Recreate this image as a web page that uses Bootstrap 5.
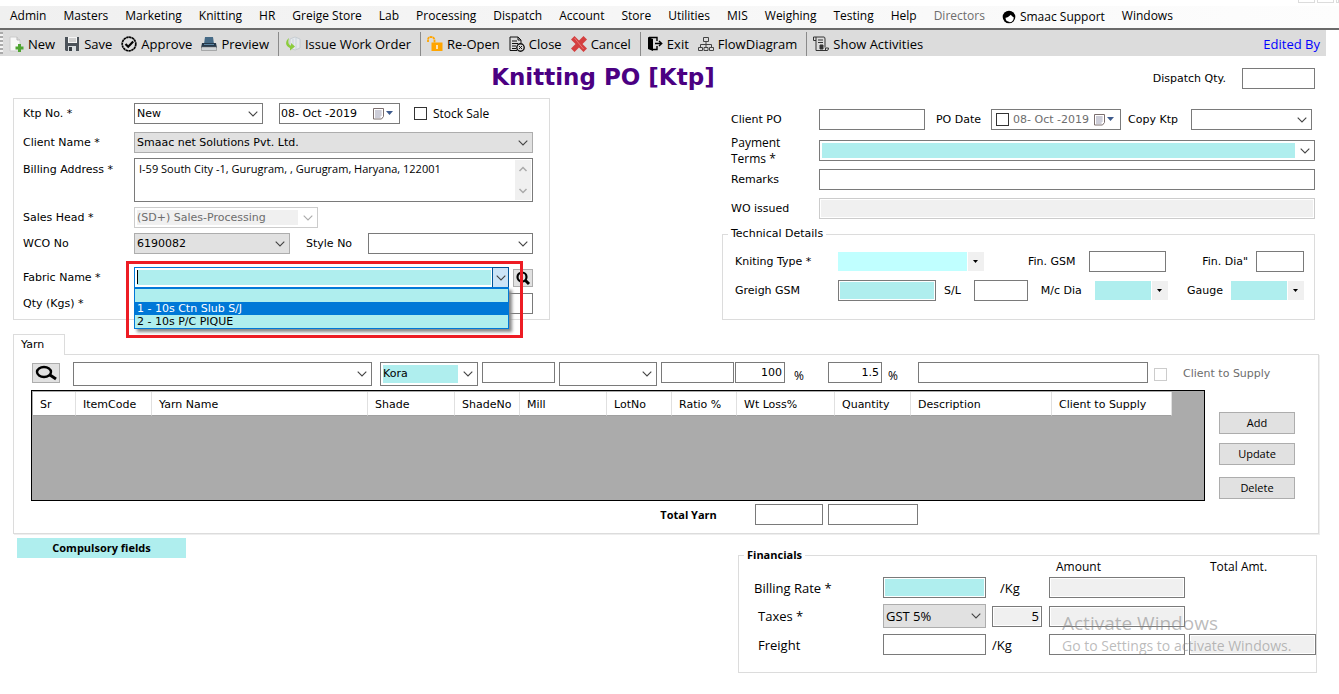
<!DOCTYPE html>
<html lang="en">
<head>
<meta charset="utf-8">
<meta name="viewport" content="width=device-width, initial-scale=1">
<title>Knitting PO [Ktp]</title>
<link href="https://cdn.jsdelivr.net/npm/bootstrap@5.3.0/dist/css/bootstrap.min.css" rel="stylesheet">
<script src="https://cdn.jsdelivr.net/npm/bootstrap@5.3.0/dist/js/bootstrap.bundle.min.js" defer></script>
<style>
:root{--aqua:#afeeee;--line:#dcdcdc;--edge:#7a7a7a;--ui:"Open Sans","Noto Sans",sans-serif;--vd:"DejaVu Sans",sans-serif;
--chev:url("data:image/svg+xml,%3Csvg xmlns='http://www.w3.org/2000/svg' viewBox='0 0 10 6'%3E%3Cpath d='M.7.7 5 5 9.3.7' fill='none' stroke='%23444' stroke-width='1.1'/%3E%3C/svg%3E");
--chevdim:url("data:image/svg+xml,%3Csvg xmlns='http://www.w3.org/2000/svg' viewBox='0 0 10 6'%3E%3Cpath d='M.7.7 5 5 9.3.7' fill='none' stroke='%23aaa' stroke-width='1.1'/%3E%3C/svg%3E");
--tri:url("data:image/svg+xml,%3Csvg xmlns='http://www.w3.org/2000/svg' viewBox='0 0 5 3'%3E%3Cpath d='M0 0h5L2.5 3z'/%3E%3C/svg%3E")}
body{font:11px/16px var(--vd);color:#000;background:#fff}
.ui{font-family:var(--ui);font-size:12px}
.ui11{font-family:var(--ui);font-size:11px}
.big{font-size:13px}
/* menu and toolbar */
.winstrip{height:6px;gap:2px}
.winstrip span{width:17px;height:3px;border:1px solid var(--line);border-top:0}
.winstrip .cut{width:3px}
.menubar{background:linear-gradient(90deg,#f0f0f0,#fdfdfd);border-bottom:2px solid #6a6a6a;height:24px;padding-left:10px;column-gap:17px}
.menubar a{color:#000;padding:0;font:12px/20px var(--ui);white-space:nowrap}
.menubar a.off{color:#6d6d6d}
.toolbar{background:var(--line);height:26px;margin-right:13px;padding:1px 6px 0 8px;font:13px/20px var(--ui);position:relative}
.toolbar::before{content:"";position:absolute;left:0;top:2px;bottom:2px;width:3px;background:repeating-linear-gradient(#aaa 0 2px,#f4f4f4 2px 4px)}
.toolbar button{border:0;background:none;padding:0;display:flex;align-items:center;gap:4px;margin-right:9px;color:#000;white-space:nowrap}
.toolbar svg{width:16px;height:16px;flex:none}
.toolbar .vr{background:#8a8a8a;opacity:1;margin:1px 6px 0 0}
.toolbar a{color:#00f;text-decoration:none}
/* page areas */
.titlerow{display:grid;grid-template-columns:478fr auto 438fr auto 73px;padding:3px 24px 0 13px;height:42px;align-items:center}
.titlerow h1{font:bold 23px/30px var(--vd);color:#4b0082;margin:0 0 4px;grid-column:2;white-space:nowrap}
.titlerow label{grid-column:4}
.areas{display:grid;grid-template-columns:537fr 172fr 593fr;padding:0 24px 0 13px}
.box{border:1px solid var(--line)}
.keyform{padding:4px 16px 5px 9px}
.keyform .line>label:first-child{width:111px;flex:none}
.line{display:flex;align-items:center;margin-bottom:5px}
.m8{margin-bottom:8px}.m10{margin-bottom:10px}.m13{margin-bottom:13px}
/* controls */
.f{height:21px;border:1px solid var(--edge);border-radius:0;background:#fff;color:#000;padding:0 2px;font:inherit;min-width:0;outline-offset:0}
.tall{height:24px}
input.soft{box-shadow:inset 0 0 0 1px #fff}
.aquain{background:var(--aqua)}
.greyin{background:#f0f0f0}
.faint{border-color:#ccc}
select.f{appearance:none;background:#fff var(--chev) no-repeat right 4px center/10px 6px;padding-right:18px}
select.flat{background-color:#e1e1e1;border-color:#adadad}
select.wash{background-image:var(--chev),linear-gradient(var(--aqua),var(--aqua));background-position:right 4px center,2px 2px;background-size:10px 6px,calc(100% - 21px) calc(100% - 4px)}
select.dim{border-color:#ccc;color:#6d6d6d;opacity:1;background-image:var(--chevdim),linear-gradient(#f0f0f0,#f0f0f0);background-position:right 4px center,2px 2px;background-size:10px 6px,calc(100% - 21px) calc(100% - 4px)}
select.old{height:19px;border:0;background:var(--tri) no-repeat right 6px center/5px 3px,linear-gradient(#f0f0f0,#f0f0f0) no-repeat right/16px 100%,linear-gradient(#fff,#fff) no-repeat right/17px 100%,var(--aqua)}
select.pale{background-color:#c0ffff}
.tick{appearance:none;width:13px;height:13px;border:1px solid #333;background:#fff;margin:0;flex:none}
.tick.faint{border-color:#ccc}
.gap14{margin-left:14px}.gap6{margin-left:6px}
.datebox{display:flex;align-items:center;height:21px;border:1px solid var(--edge);background:#fff;padding:0 5px 0 1px;flex:none}
.datebox input[type=text]{border:0;padding:0;flex:1;min-width:0;background:none;font:inherit;color:inherit}
.datebox button{border:0;background:none;padding:0;display:flex;align-items:center}
.grey{color:#6d6d6d}
textarea.f{display:block;width:100%;height:44px;resize:none;padding:2px 18px 0 4px;overflow:hidden;line-height:16px}
textarea.ui11{font:11px/16px var(--ui)}
.scroller{position:absolute;right:2px;top:2px;bottom:2px;width:16px;background:#f0f0f0}
.btnface{background:#e1e1e1;border:1px solid #adadad;border-radius:0;padding:0;color:#000;display:flex;align-items:center;justify-content:center}
/* fabric combo */
.combo{height:21px;border:1px solid #0078d7;display:flex;background:#fff}
.combo input{flex:1;min-width:0;border:0;background:var(--aqua);margin:2px 2px;padding:0}
.combo button{width:17px;margin:-1px;border:1px solid #005499;background:#cce4f7 var(--chev) no-repeat center/10px 6px;padding:0}
.caret{position:absolute;left:3px;top:3px;width:1px;height:14px;background:#000}
.droplist{position:absolute;z-index:3;left:0;right:0;top:20px;border:1px solid #0078d7;border-top-width:2px;background:var(--aqua);box-shadow:3px 3px 3px #888;line-height:13px;margin:0;padding:0;list-style:none}
.droplist li{height:13px;padding-left:2px}
.droplist .on{background:#0078d7;color:#fff}
.redmark{position:absolute;z-index:4;left:-8px;right:-14px;top:-6px;height:77px;border:3px solid #ed1c24;pointer-events:none}
/* order details */
.order{padding:11px 0 0 9px}
.order .line>label:first-child{width:88px;flex:none}
.order .line{height:21px}
.polabel{margin:0 10px 0 11px;flex:none}
.copylabel{margin:0 13px 0 7px;flex:none}
.copysel{margin-right:3px;flex:none}
fieldset.box{min-width:0;position:relative}
fieldset legend{float:none;width:auto;font-size:11px;line-height:16px;margin:0 0 0 5px;padding:0 3px}
.tech{padding:9px 10px 13px 9px}
.tech legend{margin-left:-4px}
.techrow label:first-child{width:106px;padding-left:3px;flex:none}
.gapl{margin-left:13px}
.gap44{margin-left:44px}
/* yarn */
.yarn{margin:14px 20px 0 13px}
.yarn .nav-tabs{border:0}
.yarn .nav-link{border:1px solid var(--line);border-bottom:0;border-radius:0;color:#000;background:#fff;padding:2px 20px 3px 7px;height:21px;margin:0 0 -1px;position:relative;z-index:1;line-height:16px}
.yarnpane{border:1px solid var(--line);box-shadow:1px 1px 0 #eee;padding:7px 23px 8px 17px}
.entry{display:flex;align-items:flex-start;gap:4px;height:28px;padding-left:1px}
.find{margin:1px 9px 0 0}
.joined{margin-left:-3px}
.pct,.pct2{width:35px;padding:6px 0 0 5px}
.pct2{width:28px;padding-left:2px}
.desc{width:230px}
.cts{padding:4px 0 0 12px;width:124px;white-space:nowrap;flex:none}
.ctsbox{margin:6px 0 0 2px}
.gridbox{flex:1;height:111px;border:1px solid #000;background:#ababab;padding:1px 32px 0 1px;min-width:0}
.gridbox table{table-layout:fixed;width:100%;border-collapse:separate;border-spacing:0;margin:0}
.gridbox th{font-weight:400;height:24px;padding:2px 0 0 7px;background:#fff;border-right:1px solid #e0e0e0;border-bottom:1px solid #a0a0a0;white-space:nowrap}
.c43{width:43px}.c65{width:65px}.c76{width:76px}.c87{width:87px}.c98{width:98px}.c120{width:120px}.c141{width:141px}
.acts{width:76px;margin-left:14px;padding-top:22px;display:flex;flex-direction:column;gap:9px}
.acts button{height:22px;font-weight:500}
.acts .last{margin-top:3px}
.totals{display:grid;grid-template-columns:629fr auto 38px 68px 5px 90px 377fr;padding-top:3px;align-items:center}
/* footer row */
.bottomrow{display:grid;grid-template-columns:169px 1fr 579px;padding:4px 22px 0 17px;align-items:start}
.must{background:var(--aqua);line-height:20px;height:20px;text-align:center}
.fin{grid-column:3;margin-top:9px;height:126px;padding:0}
.fingrid{display:grid;grid-template-columns:129px 103px 6px 50px 7px 136px 4px 1fr;padding-left:15px;margin-top:-4px;row-gap:6px;align-items:center}
.fingrid .r{grid-column:1}
.fingrid .amt{grid-column:6;padding-left:7px;margin-bottom:-4px}
.fingrid .tot{grid-column:8;padding-left:21px;margin-bottom:-4px}
.wmark{position:absolute;left:323px;bottom:15px;color:rgba(130,130,130,.55);pointer-events:none;white-space:nowrap;font-family:var(--ui)}
.wmark div{font-size:19px;line-height:24px}
.wmark p{font-size:14px;line-height:22px;margin:0}
.w48{width:48px}.w50{width:50px}.w54{width:54px}.w73{width:73px}.w77{width:77px}.w98{width:98px}.w121{width:121px}.w129{width:129px}.w130{width:130px}.w146{width:146px}.w156{width:156px}.w165{width:165px}.w184{width:184px}.w298{width:298px}
</style>
</head>
<body>
<div class="winstrip d-flex justify-content-end" aria-hidden="true"><span></span><span></span><span class="cut"></span></div>
<nav class="menubar nav flex-nowrap" aria-label="Main menu">
<a class="nav-link" href="#">Admin</a><a class="nav-link" href="#">Masters</a><a class="nav-link" href="#">Marketing</a><a class="nav-link" href="#">Knitting</a><a class="nav-link" href="#">HR</a><a class="nav-link" href="#">Greige Store</a><a class="nav-link" href="#">Lab</a><a class="nav-link" href="#">Processing</a><a class="nav-link" href="#">Dispatch</a><a class="nav-link" href="#">Account</a><a class="nav-link" href="#">Store</a><a class="nav-link" href="#">Utilities</a><a class="nav-link" href="#">MIS</a><a class="nav-link" href="#">Weighing</a><a class="nav-link" href="#">Testing</a><a class="nav-link" href="#">Help</a><a class="nav-link off" href="#">Directors</a>
<a class="nav-link d-flex align-items-center gap-1 ms-n1" href="#"><svg width="14" height="14" viewBox="0 0 14 14"><circle cx="7" cy="7" r="6.300"/><path d="M3.500 7.800C5 8 6.500 6.800 8.800 4.800c.8 1.200 1.700 2 3 2.700-.2 3-1.800 4.700-4.300 4.700-2.300 0-4-1.800-4-4.400z" fill="#fff"/><path d="M2.800 9.500Q4 12.600 7.500 12.400" fill="none" stroke="#000"/></svg>Smaac Support</a><a class="nav-link" href="#">Windows</a>
</nav>
<div class="toolbar d-flex align-items-center" role="toolbar">
<button type="button"><svg viewBox="0 0 16 16"><path d="M2 1h7l3 3v11H2z" fill="#f8f8f8" stroke="#ccc"/><path d="M9 1v3h3" fill="#ddd" stroke="#bbb"/><path d="M10 8h3v2.500h2.500v3H13V16h-3v-2.500H7.500v-3H10z" fill="#4fa532"/></svg>New</button>
<button type="button"><svg viewBox="0 0 16 16"><path d="M1 1h14v14H2l-1-1z" fill="#4b5259"/><path d="M4 1h9v6H4z" fill="#f4f4f4"/><path d="M5 3h7M5 5h7" stroke="#aaa"/><path d="M4 10h8v5H4z" fill="#d8dde0"/><path d="M5 11h3v4H5z" fill="#353b40"/></svg>Save</button>
<button type="button"><svg viewBox="0 0 16 16" fill="none" stroke="#000"><circle cx="8" cy="8" r="6.800" stroke-width="1.700" stroke-dasharray="2.500 .4"/><path d="m4.500 8 2.700 2.700 5-5.200" stroke-width="2.200"/></svg>Approve</button>
<button type="button"><svg viewBox="0 0 16 16"><path d="M4 1h8l1 7H3z" fill="#466b87"/><path d="M1 7h14l1 5H0z" fill="#26394b"/><path d="M.5 11h15v3.500H.5z" fill="#cfd4d8" stroke="#777" stroke-width=".5"/><path d="M3 8.500h10" stroke="#5c86a5"/></svg>Preview</button>
<span class="vr"></span>
<button type="button"><svg viewBox="0 0 16 16"><path d="m5 3 5-2 5 2v9l-5 2-5-2z" fill="#e6e9ec" stroke="#bac3ca" stroke-width=".7"/><path d="m8 3v9m3-10v11" stroke="#c7d3dc"/><path d="M4 2C0 5 0 10 5 12v2.500l5-4-4-3.500v2.500C3 9 3 5 4 2z" fill="#8ccc3d"/></svg>Issue Work Order</button>
<span class="vr"></span>
<button type="button"><svg viewBox="0 0 16 16"><path d="M1 6V3.500Q1 1 4 1t3.500 3v3" fill="none" stroke="#ffa500" stroke-width="1.800" stroke-dasharray="2.500 .4"/><path d="M4.500 6.500h11V15h-11z" fill="#ffa500"/><path d="M10 9v4" stroke="#fff" stroke-width="1.400"/></svg>Re-Open</button>
<button type="button"><svg viewBox="0 0 16 16" fill="none" stroke="#111"><path d="M8 14.500H1V1h8l3 3v3M9 1v3h3M3 5h5M3 7.500h6M3 10h4M3 12.500h4"/><circle cx="11.500" cy="11.500" r="3.700" stroke-width="1.400"/><path d="m10 10 3 3m0-3-3 3"/></svg>Close</button>
<button type="button"><svg viewBox="0 0 16 16"><path d="m3.500 0 4.500 4.500L12.500 0 16 3.500 11.500 8l4.500 4.500-3.500 3.500L8 11.500 3.500 16 0 12.500 4.500 8 0 3.500z" fill="#d43f3f"/><path d="m3.500 2 9 11" stroke="#e87575"/></svg>Cancel</button>
<span class="vr"></span>
<button type="button"><svg viewBox="0 0 16 16"><path d="m1 1 5 2v12l-5-2z"/><path d="M2 1.500h8v3.500M6 13.500h4V10M8 7.500h6M12 5l2.700 2.500L12 10" fill="none" stroke="#000" stroke-width="1.400"/></svg>Exit</button>
<button type="button"><svg viewBox="0 0 16 16" fill="none" stroke="#444"><path d="M5.500 1.500h5v4h-5zM.5 11.500h4v3h-4zM6 11.500h4v3H6zM11.500 11.500h4v3h-4zM8 5.500v6M2.500 11.500v-3h11v3"/></svg>FlowDiagram</button>
<span class="vr"></span>
<button type="button"><svg viewBox="0 0 16 16" fill="none" stroke="#333"><path d="M3 4.500H.5V1H11q1 0 1 2v8.500M3 1v13.500h11q1.500 0 1.500-2.500h-3v2.500M5 4h5M5 6.500h5"/><path d="M7 9h3v4H7z" fill="#333"/></svg>Show Activities</button>
<a class="ms-auto" href="#">Edited By</a>
</div>
<main>
<div class="titlerow"><h1>Knitting PO [Ktp]</h1><label class="pe-3" for="dq">Dispatch Qty.</label><input class="f w73" id="dq"></div>
<div class="areas">
<form class="box keyform">
<div class="line m8"><label for="ktp">Ktp No. *</label><select class="f w129" id="ktp"><option>New</option></select>
<div class="datebox w121 ms-3"><input type="text" aria-label="Ktp date" value="08- Oct -2019"><button type="button" aria-label="Open calendar"><svg width="22" height="14" viewBox="0 0 22 14"><path d="M1.500 1.500h10v8l-2 2.500h-8z" fill="#fff" stroke="#7b6e6e"/><path d="M3 4h7M3 6h7M3 8h7M3 10h5M4 3v8M6 3v8M8 3v8" stroke="#aab" stroke-width=".7"/><path d="M14 4h7l-3.500 4z" fill="#3d5a8c"/></svg></button></div>
<input class="tick gap14" type="checkbox" id="ss"><label class="ui gap6" for="ss">Stock Sale</label></div>
<div class="line"><label for="cn">Client Name *</label><select class="f flat flex-fill" id="cn"><option>Smaac net Solutions Pvt. Ltd.</option></select></div>
<div class="line align-items-start"><label class="pt-1" for="ba">Billing Address *</label><div class="position-relative flex-fill"><textarea class="f ui11" id="ba">I-59 South City -1, Gurugram, , Gurugram, Haryana, 122001</textarea><svg class="scroller" viewBox="0 0 16 40" aria-hidden="true" height="40"><path d="m4.500 11 3.500-3.500 3.500 3.500M4.500 29 8 32.500l3.500-3.500" fill="none" stroke="#aaa" stroke-width="1.500"/></svg></div></div>
<div class="line"><label for="sh">Sales Head *</label><select class="f dim w184" id="sh" disabled><option>(SD+) Sales-Processing</option></select></div>
<div class="line m13"><label for="wco">WCO No</label><select class="f flat w156" id="wco"><option>6190082</option></select><label class="ms-3" for="sty">Style No</label><select class="f w165 ms-auto" id="sty"><option></option></select></div>
<div class="line"><label for="fab">Fabric Name *</label>
<div class="position-relative flex-fill"><div class="combo"><input id="fab" role="combobox" aria-expanded="true" aria-controls="fablist"><button type="button" aria-label="Show fabrics"></button></div><span class="caret"></span>
<ul class="droplist" id="fablist" role="listbox"><li role="option"></li><li class="on" role="option">1 - 10s Ctn Slub S/J</li><li role="option">2 - 10s P/C PIQUE</li></ul><div class="redmark"></div></div>
<button type="button" class="btnface ms-1" aria-label="Find fabric"><svg width="18" height="16" viewBox="0 0 18 16" fill="none" stroke="#000"><circle cx="8" cy="7" r="4.500" stroke-width="2.200"/><path d="m11 10 4 4" stroke-width="3"/></svg></button></div>
<div class="line mb-0"><label for="qty">Qty (Kgs) *</label><input class="f flex-fill" id="qty"></div>
</form>
<div></div>
<div class="d-flex flex-column justify-content-between">
<form class="order">
<div class="line m10"><label for="cpo">Client PO</label><input class="f flex-fill" id="cpo" size="1"><label class="polabel" for="pod">PO Date</label>
<div class="datebox grey w130 ps-1"><input class="tick me-1" type="checkbox" aria-label="Use PO date"><input type="text" id="pod" value="08- Oct -2019"><button type="button" aria-label="Open calendar"><svg width="22" height="14" viewBox="0 0 22 14"><path d="M1.500 1.500h10v8l-2 2.500h-8z" fill="#fff" stroke="#7b6e6e"/><path d="M3 4h7M3 6h7M3 8h7M3 10h5M4 3v8M6 3v8M8 3v8" stroke="#aab" stroke-width=".7"/><path d="M14 4h7l-3.500 4z" fill="#3d5a8c"/></svg></button></div>
<label class="copylabel" for="cktp">Copy Ktp</label><select class="f w121 copysel" id="cktp"><option></option></select></div>
<div class="line m8"><label class="ui" for="pt">Payment<br>Terms *</label><select class="f wash flex-fill" id="pt"><option></option></select></div>
<div class="line m8"><label for="rem">Remarks</label><input class="f flex-fill" id="rem"></div>
<div class="line mb-0"><label for="wo">WO issued</label><input class="f greyin soft faint flex-fill" id="wo" readonly></div>
</form>
<fieldset class="box tech"><legend>Technical Details</legend>
<div class="line m8 techrow"><label for="kt">Kniting Type *</label><select class="f old pale w146" id="kt"><option></option></select><label class="gap44" for="fg">Fin. GSM</label><input class="f w77 gapl" id="fg"><label class="ms-auto" for="fd">Fin. Dia"</label><input class="f w48 ms-2" id="fd"></div>
<div class="line techrow"><label for="gg">Greigh GSM</label><input class="f aquain soft w98" id="gg"><label class="ms-2" for="sl">S/L</label><input class="f w54 gapl" id="sl"><label class="gapl" for="mc">M/c Dia</label><select class="f old w73 gapl" id="mc"><option></option></select><label class="ms-auto" for="ga">Gauge</label><select class="f old w73 ms-2" id="ga"><option></option></select></div>
</fieldset>
</div>
</div>
<section class="yarn">
<ul class="nav nav-tabs"><li><a class="nav-link" href="#">Yarn</a></li></ul>
<div class="yarnpane">
<div class="entry">
<button type="button" class="btnface find" aria-label="Find yarn"><svg width="26" height="18" viewBox="0 0 26 18" fill="none" stroke="#000"><ellipse cx="11" cy="8" rx="7" ry="5" stroke-width="2.400"/><path d="m17 11 6 4" stroke-width="3"/></svg></button>
<select class="f tall flex-fill w298 me-1" aria-label="Yarn"><option></option></select>
<select class="f tall wash w98 ui" aria-label="Shade"><option>Kora</option></select>
<input class="f w73" aria-label="Shade number"><select class="f tall w98" aria-label="Mill"><option></option></select>
<input class="f w73" aria-label="Lot number"><input class="f ui text-end w50 joined" aria-label="Ratio" value="100"><span class="ui pct">%</span>
<input class="f w54 ui text-end" aria-label="Weight loss" value="1.5"><span class="ui pct2">%</span>
<input class="f desc" aria-label="Description">
<input class="tick faint ctsbox" type="checkbox" id="cts" disabled><label class="grey cts" for="cts">Client to Supply</label>
</div>
<div class="d-flex">
<div class="gridbox"><table><colgroup><col class="c43"><col class="c76"><col><col class="c87"><col class="c65"><col class="c87"><col class="c65"><col class="c65"><col class="c98"><col class="c76"><col class="c141"><col class="c120"></colgroup><thead><tr><th>Sr</th><th>ItemCode</th><th>Yarn Name</th><th>Shade</th><th>ShadeNo</th><th>Mill</th><th>LotNo</th><th>Ratio %</th><th>Wt Loss%</th><th>Quantity</th><th>Description</th><th>Client to Supply</th></tr></thead></table></div>
<div class="acts ui11"><button type="button" class="btnface">Add</button><button type="button" class="btnface">Update</button><button type="button" class="btnface last">Delete</button></div>
</div>
<div class="totals"><span></span><b class="ui11">Total Yarn</b><span></span><input class="f" aria-label="Total weight loss"><span></span><input class="f" aria-label="Total quantity"></div>
</div>
</section>
<div class="bottomrow ui">
<b class="must ui11">Compulsory fields</b>
<fieldset class="box fin"><legend><b>Financials</b></legend>
<div class="fingrid big">
<span class="ui amt">Amount</span><span class="ui tot">Total Amt.</span>
<label class="r" for="br">Billing Rate *</label><input class="f aquain soft" id="br"><span></span><span class="ps-2">/Kg</span><span></span><input class="f greyin soft" aria-label="Billing amount" readonly>
<label class="r ps-1" for="tx">Taxes *</label><select class="f flat tall ui" id="tx"><option>GST 5%</option></select><span></span><input class="f greyin soft text-end" aria-label="Tax percent" value="5"><span></span><input class="f greyin soft" aria-label="Tax amount" readonly>
<label class="r ps-1" for="fr">Freight</label><input class="f" id="fr"><span></span><span>/Kg</span><span></span><input class="f" aria-label="Freight amount"><span></span><input class="f greyin soft" aria-label="Total amount" readonly>
</div>
<div class="wmark"><div>Activate Windows</div><p>Go to Settings to activate Windows.</p></div>
</fieldset>
</div>
</main>
</body>
</html>
